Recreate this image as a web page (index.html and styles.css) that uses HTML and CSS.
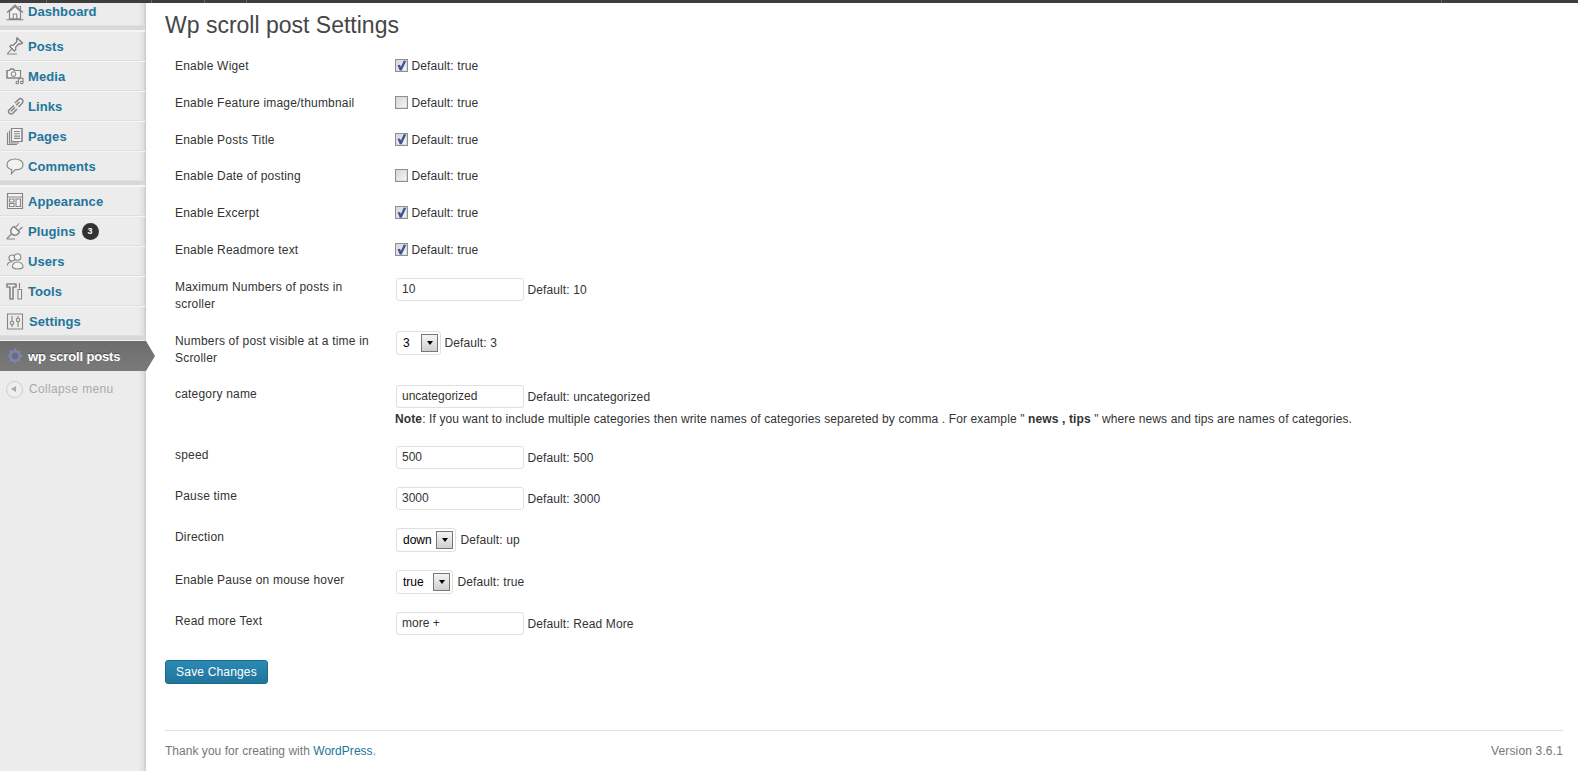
FILE: index.html
```html
<!DOCTYPE html>
<html lang="en">
<head>
<meta charset="utf-8">
<title>Wp scroll post Settings</title>
<link rel="stylesheet" href="styles.css">
</head>
<body>
<div class="topbar"><i class="tick t1"></i><i class="tick t2"></i><i class="tick t3"></i><i class="tick t4"></i><i class="tick t5"></i></div>
<div class="shell">
<nav class="sidebar">
  <ul class="menu first-group">
    <li class="item item-top"><svg class="ico" viewBox="0 0 18 18"><path class="soft" d="M3.500 8.500 9 3.500 14.500 8.500V16H3.500Z"/><path d="M1 9.500 9 2 17 9.500M3.500 8V16H14.500V8M7.200 16V11H10.800V16M12.500 3.500H14.500V6.500M0.500 16.800H17.500"/></svg><a href="#">Dashboard</a></li>
  </ul>
  <div class="sep"></div>
  <ul class="menu">
    <li class="item"><svg class="ico" viewBox="0 0 18 18"><path class="soft" d="M11 1 16.500 6 14.800 7 12.800 6.800 9.500 10.500 9.700 12.800 8.300 14 3.800 9.500 5 8.200 7.300 8.300 10.800 4.700 10.500 2.500Z"/><path d="M11 1 16.500 6 14.800 7 12.800 6.800 9.500 10.500 9.700 12.800 8.300 14 3.800 9.500 5 8.200 7.300 8.300 10.800 4.700 10.500 2.500ZM5.800 11.800 1.500 16.500M1 17H11"/></svg><a href="#">Posts</a></li>
    <li class="item"><svg class="ico" viewBox="0 0 18 18"><path class="soft" d="M1 3.500H3.500L4.500 2H7.500L8.500 3.500H14.500V11H1Z"/><path d="M1 3.500H3.500L4.500 2H7.500L8.500 3.500H14.500V11H1ZM7.500 4.800a2.300 2.300 0 1 0 .01 0ZM12.500 12V15M17 11V15M12.500 12 17 11"/><circle cx="11.300" cy="15.500" r="1.300"/><circle cx="15.800" cy="15.500" r="1.300"/></svg><a href="#">Media</a></li>
    <li class="item"><svg class="ico ico-bold" viewBox="0 0 18 18"><path d="M9 6 12.500 2.500a2.600 2.600 0 0 1 3.700 3.700L12.500 10M10.300 8.200 13.500 5M8 8.500 3 13a2.600 2.600 0 0 0 3.700 3.500L11 12M5 14.200 9 10.500"/></svg><a href="#">Links</a></li>
    <li class="item"><svg class="ico" viewBox="0 0 18 18"><path class="soft" d="M5.500 1.500H16V14.500H5.500Z"/><path d="M5.500 1.500H16V14.500H5.500ZM3.500 3.500V16H13M1.500 5.500V17.500H11M8 4.500H14M8 6.800H14M8 9.100H14M8 11.400H14"/></svg><a href="#">Pages</a></li>
    <li class="item"><svg class="ico ico-fill" viewBox="0 0 18 18"><path d="M9 2C4.500 2 1 4.200 1 7.500 1 10 3 12 5.800 12.600L5.500 16.800 9 12.900C13.800 12.900 17 10.800 17 7.500 17 4.200 13.500 2 9 2Z"/></svg><a href="#">Comments</a></li>
  </ul>
  <div class="sep"></div>
  <ul class="menu">
    <li class="item"><svg class="ico" viewBox="0 0 18 18"><path class="soft" d="M1.500 1.500H16.500V16.500H1.500Z"/><path d="M1.500 1.500H16.500V16.500H1.500ZM1.500 5H16.500M3.500 7H8V10H3.500ZM3.500 11.500H8V14.500H3.500ZM10 7H14.500V14.500H10Z"/></svg><a href="#">Appearance</a></li>
    <li class="item"><svg class="ico" viewBox="0 0 18 18"><path class="soft" d="M8 4.500 13.500 10C12 13 9 14 7 12.800L5 10.800C4 8.800 5.500 5.500 8 4.500Z"/><path d="M8 4.500 13.500 10C12 13 9 14 7 12.800L5 10.800C4 8.800 5.500 5.500 8 4.500ZM9.500 5.500 13 1.500M12.500 8.500 16.500 5M5.500 12 1 16.500M0.500 17H9"/></svg><a href="#">Plugins</a> <span class="badge">3</span></li>
    <li class="item"><svg class="ico" viewBox="0 0 18 18"><circle class="soft" cx="6" cy="6" r="3"/><circle class="soft" cx="11.500" cy="5" r="3.300"/><path class="soft" d="M6.500 15.500C6 12 8.500 10 11.500 10 15 10 17.500 12.500 17 15.500 14.500 17.500 9 17.500 6.500 15.500Z"/><path d="M1.500 13.500C1 11 3.500 9.800 6 9.800"/></svg><a href="#">Users</a></li>
    <li class="item"><svg class="ico" viewBox="0 0 18 18"><path class="soft" d="M1 2H10V5H7V17H4V5H1Z"/><path d="M1 2H10V5H7V17H4V5H1ZM13.500 1V6.500"/><path class="soft" d="M12 7.500H15.500V17H12Z"/></svg><a href="#">Tools</a></li>
    <li class="item"><svg class="ico" viewBox="0 0 18 18"><path d="M1.500 2H16.500V17H1.500ZM6 4V9M6 13V15M12 4V6M12 10V15"/><circle cx="6" cy="11" r="1.700"/><circle cx="12" cy="8" r="1.700"/></svg><a class="nudge" href="#">Settings</a></li>
  </ul>
  <div class="sep"></div>
  <ul class="menu">
    <li class="item active"><svg class="ico ico-gear" viewBox="0 0 18 18"><path class="gear-teeth" d="M9 1.500V16.500M1.500 9H16.500M3.700 3.700 14.300 14.300M3.700 14.300 14.300 3.700"/><circle class="gear-ring" cx="9" cy="9" r="4.600"/></svg><a href="#">wp scroll posts</a></li>
  </ul>
  <div class="collapse"><span class="collapse-btn"></span><span class="collapse-label">Collapse menu</span></div>
</nav>

<main class="content">
  <h2>Wp scroll post Settings</h2>
  <form>
    <table class="form-table">
      <tr><th>Enable Wiget</th><td><input class="cb" type="checkbox" checked> Default: true</td></tr>
      <tr><th>Enable Feature image/thumbnail</th><td><input class="cb" type="checkbox"> Default: true</td></tr>
      <tr><th>Enable Posts Title</th><td><input class="cb" type="checkbox" checked> Default: true</td></tr>
      <tr><th>Enable Date of posting</th><td><input class="cb" type="checkbox"> Default: true</td></tr>
      <tr><th>Enable Excerpt</th><td><input class="cb" type="checkbox" checked> Default: true</td></tr>
      <tr><th>Enable Readmore text</th><td><input class="cb" type="checkbox" checked> Default: true</td></tr>
      <tr><th>Maximum Numbers of posts in scroller</th><td><input class="txt" type="text" value="10"> Default: 10</td></tr>
      <tr><th class="th-low">Numbers of post visible at a time in Scroller</th><td><span class="sel sel-3"><select><option>3</option></select><i class="arrow"></i></span> Default: 3</td></tr>
      <tr><th>category name</th><td><input class="txt" type="text" value="uncategorized"> Default: uncategorized<br><b>Note</b>: If you want to include multiple categories then write names of categories separeted by comma . For example " <b>news , tips</b> " where news and tips are names of categories.</td></tr>
      <tr><th>speed</th><td><input class="txt" type="text" value="500"> Default: 500</td></tr>
      <tr><th>Pause time</th><td><input class="txt" type="text" value="3000"> Default: 3000</td></tr>
      <tr><th>Direction</th><td><span class="sel sel-down"><select><option>down</option></select><i class="arrow"></i></span> Default: up</td></tr>
      <tr><th>Enable Pause on mouse hover</th><td><span class="sel sel-true"><select><option>true</option></select><i class="arrow"></i></span> Default: true</td></tr>
      <tr><th>Read more Text</th><td><input class="txt" type="text" value="more +"> Default: Read More</td></tr>
    </table>
    <p class="submit"><button class="primary" type="button">Save Changes</button></p>
  </form>
  <footer class="footer">
    <span class="thanks">Thank you for creating with <a href="#">WordPress</a>.</span>
    <span class="version">Version 3.6.1</span>
  </footer>
</main>
</div>
</body>
</html>
```

FILE: styles.css
```css
* { box-sizing: border-box; }
html, body { margin: 0; height: 771px; overflow: hidden; background: #fff; }
body { font-family: "Liberation Sans", Arial, sans-serif; font-size: 12px; color: #333; }
ul { list-style: none; margin: 0; padding: 0; }
a { text-decoration: none; color: #21759b; }

.topbar { height: 3px; background: #3e3e3e; position: relative; }
.tick { position: absolute; top: 0; width: 1px; height: 3px; background: #666; }
.t1 { left: 46px; } .t2 { left: 151px; } .t3 { left: 204px; } .t4 { left: 246px; } .t5 { left: 1441px; }

.shell { display: flex; height: 768px; }
.sidebar { width: 146px; flex: none; background: linear-gradient(to right, #ececec 0, #ececec 138px, #e2e2e2 143px, #c9c9c9 146px); }
.item { height: 30px; display: flex; align-items: center; padding-left: 6px; border-top: 1px solid #f5f5f5; border-bottom: 1px solid #dfdfdf; font-size: 13px; font-weight: bold; margin-right: 1px; position: relative; }
.item-top { height: 23px; padding-bottom: 5px; border-top: 0; border-bottom: 1px solid #dfdfdf; }
.item a { margin-left: 4px; letter-spacing: .08px; }
.item a.nudge { margin-left: 5px; }
.ico { width: 18px; height: 18px; flex: none; fill: none; stroke: #858585; stroke-width: 1.1; }
.soft { fill: #f4f4f4; }
.ico-fill { fill: #f2f2f2; }
.ico-bold { stroke-width: 1.5; }
.gear-teeth { stroke: #7b82a2; stroke-width: 2.6; }
.gear-ring { fill: #686c84; stroke: #7f86a8; stroke-width: 2.4; }
.sep { height: 5px; background: #d8d8d8; border-bottom: 1px solid #f4f4f4; margin-right: 1px; }
.badge { margin-left: 6px; width: 17px; height: 17px; border-radius: 50%; background: #333; color: #fff; font-size: 9px; line-height: 17px; text-align: center; }
.active { background: linear-gradient(to bottom, #6d6d6d, #7a7a7a); border: 0; margin-right: 0; width: 146px; }
.item.active a { color: #fff; text-shadow: 0 -1px 0 rgba(0,0,0,.4); letter-spacing: -.15px; }
.active::after { content: ""; position: absolute; left: 146px; top: 0; width: 9px; height: 30px; background: linear-gradient(to bottom, #6d6d6d, #7a7a7a); clip-path: polygon(0 0, 100% 50%, 0 100%); }
.collapse { display: flex; align-items: center; gap: 6px; height: 20px; margin-top: 8px; padding-left: 6px; color: #aaa; font-size: 12px; }
.collapse-label { letter-spacing: .35px; }
.collapse-btn { width: 17px; height: 17px; border-radius: 50%; border: 1px solid #ccc; background: #eee; position: relative; }
.collapse-btn::after { content: ""; position: absolute; left: 4px; top: 4px; border: 3.5px solid transparent; border-right: 5px solid #aaa; border-left: 0; }

.content { flex: 1; min-width: 0; padding-left: 19px; padding-right: 15px; display: flex; flex-direction: column; }
h2 { font-weight: normal; font-size: 23px; line-height: 29px; color: #464646; margin: 8px 0 0; height: 35px; }
.form-table { border-collapse: collapse; margin-top: 2px; }
.form-table th { width: 220px; padding: 10px; text-align: left; vertical-align: top; font-weight: normal; line-height: 16.8px; letter-spacing: .2px; }
.form-table th.th-low { padding-top: 11px; padding-bottom: 9px; }
.form-table td { padding: 8px 10px; vertical-align: top; line-height: 20px; letter-spacing: .12px; }
.cb { appearance: none; width: 13px; height: 13px; margin: 0; vertical-align: -2px; border: 1px solid #8f8f8f; background: linear-gradient(135deg, #d4d4d4, #f8f8f8); position: relative; box-shadow: inset 0 0 0 1px #dcdcdc; }
.cb:checked::before { content: ""; position: absolute; inset: 0; background: #3f5596; clip-path: polygon(14% 48%, 36% 44%, 44% 62%, 70% 6%, 94% 6%, 52% 96%, 34% 96%); }
.txt { width: 128px; height: 23px; border: 1px solid #dfdfdf; border-radius: 3px; padding: 3px 5px; font: 12px "Liberation Sans", Arial, sans-serif; color: #333; background: #fff; margin: 1px 0 1px 1px; vertical-align: baseline; }
.sel { display: inline-block; position: relative; height: 24px; vertical-align: middle; margin: 1px 0 2px 1px; }
.sel select { appearance: none; height: 24px; width: 100%; border: 1px solid #dfdfdf; border-radius: 3px; background: #fff; color: #000; padding: 0 0 0 6px; font: 12px "Liberation Sans", Arial, sans-serif; display: block; }
.sel-3 { width: 45px; } .sel-down { width: 60px; margin-right: 1px; }
.sel-true { width: 57px; margin-top: 0; margin-bottom: 1px; margin-right: 1px; }
.arrow { position: absolute; right: 3px; top: 3px; width: 17px; height: 18px; border: 1px solid #777; background: linear-gradient(to bottom, #f4f4f4, #cfcfcf); }
.arrow::after { content: ""; position: absolute; left: 5px; top: 6px; border: 3px solid transparent; border-top: 4px solid #000; border-bottom: 0; }

.submit { margin: 16px 0 0; }
.primary { width: 103px; height: 24px; border: 1px solid #1d6a8e; border-radius: 3px; background: linear-gradient(to bottom, #2a8ab5, #21759b); color: #fff; font: 12px "Liberation Sans", Arial, sans-serif; letter-spacing: .17px; padding: 0; }
.footer { margin-top: 46px; border-top: 1px solid #dfdfdf; padding-top: 12px; display: flex; justify-content: space-between; color: #777; line-height: 16px; }
.thanks { letter-spacing: .03px; }
.version { letter-spacing: .15px; }
```
